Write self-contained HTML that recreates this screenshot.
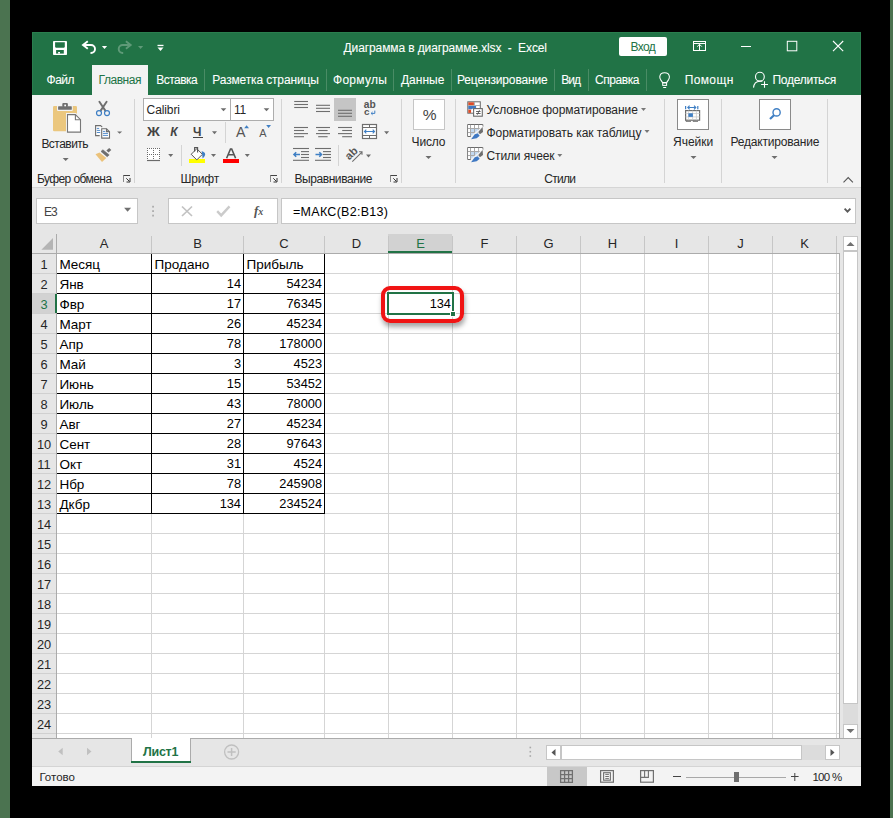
<!DOCTYPE html>
<html><head><meta charset="utf-8">
<style>
*{margin:0;padding:0;box-sizing:border-box}
html,body{width:893px;height:818px;overflow:hidden;background:#000;font-family:"Liberation Sans",sans-serif}
body{position:relative}
.a{position:absolute}
.t{position:absolute;white-space:pre;line-height:1}
svg{position:absolute;left:0;top:0;overflow:visible}
</style></head><body>

<div class="a" style="left:0px;top:0px;width:10px;height:818px;background:#4b7350"></div>
<div class="a" style="left:890px;top:0px;width:3px;height:818px;background:#4b7350"></div>
<div class="a" style="left:32px;top:32px;width:829px;height:754px;background:#e6e6e6"></div>
<div class="a" style="left:32px;top:32px;width:829px;height:63px;background:#217346;border:1px solid #2a7e4e;border-bottom:none"></div>
<div class="t" style="left:343.6px;top:42px;font-size:12px;letter-spacing:-0.114px;color:#ffffff;-webkit-text-stroke:0.08px #fff;">Диаграмма в диаграмме.xlsx  -  Excel</div>
<div class="a" style="left:619px;top:37px;width:48px;height:19px;background:#fff;border-radius:2px"></div>
<div class="t" style="left:630.5px;top:41px;font-size:12px;letter-spacing:-0.648px;color:#217346;">Вход</div>
<div class="a" style="left:92px;top:65px;width:56px;height:31px;background:#f3f3f3"></div>
<div class="t" style="left:46.6px;top:74px;font-size:12px;letter-spacing:-0.534px;color:#ffffff;-webkit-text-stroke:0.08px #fff;">Файл</div>
<div class="t" style="left:98.5px;top:74px;font-size:12px;letter-spacing:-0.446px;color:#217346;">Главная</div>
<div class="t" style="left:156.3px;top:74px;font-size:12px;letter-spacing:-0.533px;color:#ffffff;-webkit-text-stroke:0.08px #fff;">Вставка</div>
<div class="t" style="left:212.3px;top:74px;font-size:12px;letter-spacing:-0.147px;color:#ffffff;-webkit-text-stroke:0.08px #fff;">Разметка страницы</div>
<div class="t" style="left:333.0px;top:74px;font-size:12px;letter-spacing:0.264px;color:#ffffff;-webkit-text-stroke:0.08px #fff;">Формулы</div>
<div class="t" style="left:401.0px;top:74px;font-size:12px;letter-spacing:-0.010px;color:#ffffff;-webkit-text-stroke:0.08px #fff;">Данные</div>
<div class="t" style="left:457.0px;top:74px;font-size:12px;letter-spacing:-0.150px;color:#ffffff;-webkit-text-stroke:0.08px #fff;">Рецензирование</div>
<div class="t" style="left:561.3px;top:74px;font-size:12px;letter-spacing:-1.004px;color:#ffffff;-webkit-text-stroke:0.08px #fff;">Вид</div>
<div class="t" style="left:595.0px;top:74px;font-size:12px;letter-spacing:-0.429px;color:#ffffff;-webkit-text-stroke:0.08px #fff;">Справка</div>
<div class="a" style="left:204px;top:69px;width:1px;height:22px;background:#4a8c65"></div>
<div class="a" style="left:326px;top:69px;width:1px;height:22px;background:#4a8c65"></div>
<div class="a" style="left:393px;top:69px;width:1px;height:22px;background:#4a8c65"></div>
<div class="a" style="left:451px;top:69px;width:1px;height:22px;background:#4a8c65"></div>
<div class="a" style="left:554px;top:69px;width:1px;height:22px;background:#4a8c65"></div>
<div class="a" style="left:588px;top:69px;width:1px;height:22px;background:#4a8c65"></div>
<div class="a" style="left:646px;top:69px;width:1px;height:22px;background:#4a8c65"></div>
<div class="t" style="left:684.7px;top:74px;font-size:12px;letter-spacing:0.376px;color:#ffffff;-webkit-text-stroke:0.08px #fff;">Помощн</div>
<div class="t" style="left:772.5px;top:74px;font-size:12px;letter-spacing:-0.273px;color:#ffffff;-webkit-text-stroke:0.08px #fff;">Поделиться</div>
<div class="a" style="left:32px;top:95px;width:829px;height:93px;background:#f3f3f3;border-bottom:1px solid #d5d5d5"></div>
<div class="t" style="left:41.4px;top:138px;font-size:12px;letter-spacing:-0.523px;color:#262626;">Вставить</div>
<div class="t" style="left:36.9px;top:173px;font-size:12px;letter-spacing:-0.576px;color:#262626;">Буфер обмена</div>
<div class="t" style="left:180.4px;top:173px;font-size:12px;letter-spacing:-0.170px;color:#262626;">Шрифт</div>
<div class="t" style="left:294.4px;top:173px;font-size:12px;letter-spacing:-0.418px;color:#262626;">Выравнивание</div>
<div class="t" style="left:544.3px;top:173px;font-size:12px;letter-spacing:-0.717px;color:#262626;">Стили</div>
<div class="t" style="left:411.6px;top:136px;font-size:12px;letter-spacing:-0.178px;color:#262626;">Число</div>
<div class="t" style="left:673.0px;top:136px;font-size:12px;letter-spacing:0.011px;color:#262626;">Ячейки</div>
<div class="t" style="left:730.5px;top:136px;font-size:12px;letter-spacing:-0.200px;color:#262626;">Редактирование</div>
<div class="t" style="left:486.5px;top:104px;font-size:12px;letter-spacing:-0.061px;color:#262626;">Условное форматирование</div>
<div class="t" style="left:486.5px;top:127px;font-size:12px;letter-spacing:-0.051px;color:#262626;">Форматировать как таблицу</div>
<div class="t" style="left:486.5px;top:150px;font-size:12px;letter-spacing:-0.125px;color:#262626;">Стили ячеек</div>
<div class="a" style="left:134px;top:99px;width:1px;height:84px;background:#d4d4d4"></div>
<div class="a" style="left:281px;top:99px;width:1px;height:84px;background:#d4d4d4"></div>
<div class="a" style="left:401px;top:99px;width:1px;height:84px;background:#d4d4d4"></div>
<div class="a" style="left:455px;top:99px;width:1px;height:84px;background:#d4d4d4"></div>
<div class="a" style="left:664px;top:99px;width:1px;height:84px;background:#d4d4d4"></div>
<div class="a" style="left:721px;top:99px;width:1px;height:84px;background:#d4d4d4"></div>
<div class="a" style="left:827px;top:99px;width:1px;height:84px;background:#d4d4d4"></div>
<div class="a" style="left:143px;top:98px;width:88px;height:23px;background:#fff;border:1px solid #adadad"></div>
<div class="a" style="left:230px;top:98px;width:44px;height:23px;background:#fff;border:1px solid #adadad"></div>
<div class="t" style="left:146.6px;top:104px;font-size:12px;letter-spacing:-0.101px;color:#262626;">Calibri</div>
<div class="t" style="left:234.0px;top:104px;font-size:12px;letter-spacing:-0.256px;color:#262626;">11</div>
<div class="t" style="left:147.2px;top:126px;font-size:12.5px;letter-spacing:0.000px;color:#444;font-weight:bold;transform:scaleX(1.13);transform-origin:0 0;">Ж</div>
<div class="t" style="left:170.3px;top:126px;font-size:12px;letter-spacing:0.000px;color:#444;font-weight:bold;font-style:italic">К</div>
<div class="t" style="left:193.0px;top:126px;font-size:12px;letter-spacing:0.000px;color:#444;font-weight:bold;">Ч</div>
<div class="a" style="left:193px;top:137px;width:10px;height:1.4px;background:#444"></div>
<div class="a" style="left:225px;top:122px;width:1px;height:21px;background:#d4d4d4"></div>
<div class="t" style="left:236.0px;top:125.45px;font-size:14.24px;color:#555;">A</div>
<div class="t" style="left:259.2px;top:128.24px;font-size:10.94px;color:#555;">A</div>
<div class="a" style="left:147px;top:148px;width:13px;height:13px;background:#fff"></div>
<div class="a" style="left:181px;top:145px;width:1px;height:21px;background:#d4d4d4"></div>
<div class="a" style="left:189px;top:159px;width:16px;height:4px;background:#ffff00"></div>
<div class="a" style="left:223px;top:159px;width:16px;height:4px;background:#ff0000"></div>
<div class="a" style="left:334px;top:98px;width:22px;height:23px;background:#c5c5c5"></div>
<div class="t" style="left:363.8px;top:100.37px;font-size:10.2px;color:#555;font-weight:bold">ab</div>
<div class="t" style="left:364.0px;top:107.43px;font-size:9.89px;color:#555;font-weight:bold">c</div>
<div class="a" style="left:338px;top:145px;width:1px;height:21px;background:#d4d4d4"></div>
<div class="t" style="left:344.5px;top:147.5px;font-size:11px;font-weight:bold;color:#555;transform:rotate(-45deg);transform-origin:50% 50%">ab</div>
<div class="a" style="left:413px;top:99px;width:32px;height:31px;background:#fff;border:1px solid #c6c6c6"></div>
<div class="t" style="left:422.8px;top:107px;font-size:15.5px;letter-spacing:0.000px;color:#444;">%</div>
<div class="a" style="left:677px;top:99px;width:32px;height:31px;background:#fff;border:1px solid #8a8a8a"></div>
<div class="a" style="left:759px;top:99px;width:32px;height:31px;background:#fff;border:1px solid #8a8a8a"></div>
<div class="a" style="left:36px;top:198px;width:102px;height:26px;background:#fff;border:1px solid #c6c6c6"></div>
<div class="t" style="left:43.9px;top:206px;font-size:12px;letter-spacing:-0.877px;color:#444;">E3</div>
<div class="a" style="left:168px;top:198px;width:110px;height:26px;background:#fff;border:1px solid #c6c6c6"></div>
<div class="t" style="left:254px;top:204px;font-size:13px;font-family:'Liberation Serif',serif;font-style:italic;font-weight:bold;color:#555">f<span style="font-size:10px">x</span></div>
<div class="a" style="left:281px;top:198px;width:575px;height:26px;background:#fff;border:1px solid #c6c6c6"></div>
<div class="t" style="left:293.0px;top:206px;font-size:12.5px;letter-spacing:0.288px;color:#000;">=МАКС(B2:B13)</div>
<div class="a" style="left:32px;top:234px;width:807px;height:19px;background:#e6e6e6"></div>
<div class="a" style="left:56px;top:253px;width:783px;height:485px;background:#fff"></div>
<div class="a" style="left:32px;top:253px;width:24px;height:485px;background:#e6e6e6"></div>
<div class="a" style="left:388px;top:234px;width:64px;height:19px;background:#d2d2d2"></div>
<div class="a" style="left:32px;top:293px;width:24px;height:20px;background:#d2d2d2"></div>
<div class="a" style="left:57px;top:273px;width:782px;height:1px;background:#d5d5d5"></div><div class="a" style="left:32px;top:273px;width:24px;height:1px;background:#d0d0d0"></div><div class="a" style="left:57px;top:293px;width:782px;height:1px;background:#d5d5d5"></div><div class="a" style="left:32px;top:293px;width:24px;height:1px;background:#d0d0d0"></div><div class="a" style="left:57px;top:313px;width:782px;height:1px;background:#d5d5d5"></div><div class="a" style="left:32px;top:313px;width:24px;height:1px;background:#d0d0d0"></div><div class="a" style="left:57px;top:333px;width:782px;height:1px;background:#d5d5d5"></div><div class="a" style="left:32px;top:333px;width:24px;height:1px;background:#d0d0d0"></div><div class="a" style="left:57px;top:353px;width:782px;height:1px;background:#d5d5d5"></div><div class="a" style="left:32px;top:353px;width:24px;height:1px;background:#d0d0d0"></div><div class="a" style="left:57px;top:373px;width:782px;height:1px;background:#d5d5d5"></div><div class="a" style="left:32px;top:373px;width:24px;height:1px;background:#d0d0d0"></div><div class="a" style="left:57px;top:393px;width:782px;height:1px;background:#d5d5d5"></div><div class="a" style="left:32px;top:393px;width:24px;height:1px;background:#d0d0d0"></div><div class="a" style="left:57px;top:413px;width:782px;height:1px;background:#d5d5d5"></div><div class="a" style="left:32px;top:413px;width:24px;height:1px;background:#d0d0d0"></div><div class="a" style="left:57px;top:433px;width:782px;height:1px;background:#d5d5d5"></div><div class="a" style="left:32px;top:433px;width:24px;height:1px;background:#d0d0d0"></div><div class="a" style="left:57px;top:453px;width:782px;height:1px;background:#d5d5d5"></div><div class="a" style="left:32px;top:453px;width:24px;height:1px;background:#d0d0d0"></div><div class="a" style="left:57px;top:473px;width:782px;height:1px;background:#d5d5d5"></div><div class="a" style="left:32px;top:473px;width:24px;height:1px;background:#d0d0d0"></div><div class="a" style="left:57px;top:493px;width:782px;height:1px;background:#d5d5d5"></div><div class="a" style="left:32px;top:493px;width:24px;height:1px;background:#d0d0d0"></div><div class="a" style="left:57px;top:513px;width:782px;height:1px;background:#d5d5d5"></div><div class="a" style="left:32px;top:513px;width:24px;height:1px;background:#d0d0d0"></div><div class="a" style="left:57px;top:533px;width:782px;height:1px;background:#d5d5d5"></div><div class="a" style="left:32px;top:533px;width:24px;height:1px;background:#d0d0d0"></div><div class="a" style="left:57px;top:553px;width:782px;height:1px;background:#d5d5d5"></div><div class="a" style="left:32px;top:553px;width:24px;height:1px;background:#d0d0d0"></div><div class="a" style="left:57px;top:573px;width:782px;height:1px;background:#d5d5d5"></div><div class="a" style="left:32px;top:573px;width:24px;height:1px;background:#d0d0d0"></div><div class="a" style="left:57px;top:593px;width:782px;height:1px;background:#d5d5d5"></div><div class="a" style="left:32px;top:593px;width:24px;height:1px;background:#d0d0d0"></div><div class="a" style="left:57px;top:613px;width:782px;height:1px;background:#d5d5d5"></div><div class="a" style="left:32px;top:613px;width:24px;height:1px;background:#d0d0d0"></div><div class="a" style="left:57px;top:633px;width:782px;height:1px;background:#d5d5d5"></div><div class="a" style="left:32px;top:633px;width:24px;height:1px;background:#d0d0d0"></div><div class="a" style="left:57px;top:653px;width:782px;height:1px;background:#d5d5d5"></div><div class="a" style="left:32px;top:653px;width:24px;height:1px;background:#d0d0d0"></div><div class="a" style="left:57px;top:673px;width:782px;height:1px;background:#d5d5d5"></div><div class="a" style="left:32px;top:673px;width:24px;height:1px;background:#d0d0d0"></div><div class="a" style="left:57px;top:693px;width:782px;height:1px;background:#d5d5d5"></div><div class="a" style="left:32px;top:693px;width:24px;height:1px;background:#d0d0d0"></div><div class="a" style="left:57px;top:713px;width:782px;height:1px;background:#d5d5d5"></div><div class="a" style="left:32px;top:713px;width:24px;height:1px;background:#d0d0d0"></div><div class="a" style="left:57px;top:733px;width:782px;height:1px;background:#d5d5d5"></div><div class="a" style="left:32px;top:733px;width:24px;height:1px;background:#d0d0d0"></div><div class="a" style="left:151px;top:253px;width:1px;height:485px;background:#d5d5d5"></div><div class="a" style="left:151px;top:236px;width:1px;height:17px;background:#c6c6c6"></div><div class="a" style="left:243px;top:253px;width:1px;height:485px;background:#d5d5d5"></div><div class="a" style="left:243px;top:236px;width:1px;height:17px;background:#c6c6c6"></div><div class="a" style="left:324px;top:253px;width:1px;height:485px;background:#d5d5d5"></div><div class="a" style="left:324px;top:236px;width:1px;height:17px;background:#c6c6c6"></div><div class="a" style="left:388px;top:253px;width:1px;height:485px;background:#d5d5d5"></div><div class="a" style="left:388px;top:236px;width:1px;height:17px;background:#c6c6c6"></div><div class="a" style="left:452px;top:253px;width:1px;height:485px;background:#d5d5d5"></div><div class="a" style="left:452px;top:236px;width:1px;height:17px;background:#c6c6c6"></div><div class="a" style="left:516px;top:253px;width:1px;height:485px;background:#d5d5d5"></div><div class="a" style="left:516px;top:236px;width:1px;height:17px;background:#c6c6c6"></div><div class="a" style="left:580px;top:253px;width:1px;height:485px;background:#d5d5d5"></div><div class="a" style="left:580px;top:236px;width:1px;height:17px;background:#c6c6c6"></div><div class="a" style="left:644px;top:253px;width:1px;height:485px;background:#d5d5d5"></div><div class="a" style="left:644px;top:236px;width:1px;height:17px;background:#c6c6c6"></div><div class="a" style="left:708px;top:253px;width:1px;height:485px;background:#d5d5d5"></div><div class="a" style="left:708px;top:236px;width:1px;height:17px;background:#c6c6c6"></div><div class="a" style="left:772px;top:253px;width:1px;height:485px;background:#d5d5d5"></div><div class="a" style="left:772px;top:236px;width:1px;height:17px;background:#c6c6c6"></div><div class="a" style="left:836px;top:253px;width:1px;height:485px;background:#d5d5d5"></div><div class="a" style="left:836px;top:236px;width:1px;height:17px;background:#c6c6c6"></div>
<div class="a" style="left:32px;top:253px;width:807px;height:1px;background:#ababab"></div>
<div class="a" style="left:56px;top:234px;width:1px;height:504px;background:#ababab"></div>
<div class="a" style="left:839px;top:253px;width:1px;height:485px;background:#ababab"></div>
<div class="a" style="left:388px;top:251px;width:64px;height:2px;background:#217346"></div>
<div class="a" style="left:55px;top:294px;width:2px;height:19px;background:#217346"></div>
<div class="t" style="left:4.0px;width:200px;text-align:center;top:237.30px;font-size:13px;color:#262626;">A</div>
<div class="t" style="left:97.5px;width:200px;text-align:center;top:237.30px;font-size:13px;color:#262626;">B</div>
<div class="t" style="left:184.0px;width:200px;text-align:center;top:237.30px;font-size:13px;color:#262626;">C</div>
<div class="t" style="left:256.5px;width:200px;text-align:center;top:237.30px;font-size:13px;color:#262626;">D</div>
<div class="t" style="left:320.5px;width:200px;text-align:center;top:237.30px;font-size:13px;color:#217346;">E</div>
<div class="t" style="left:384.5px;width:200px;text-align:center;top:237.30px;font-size:13px;color:#262626;">F</div>
<div class="t" style="left:448.5px;width:200px;text-align:center;top:237.30px;font-size:13px;color:#262626;">G</div>
<div class="t" style="left:512.5px;width:200px;text-align:center;top:237.30px;font-size:13px;color:#262626;">H</div>
<div class="t" style="left:576.5px;width:200px;text-align:center;top:237.30px;font-size:13px;color:#262626;">I</div>
<div class="t" style="left:640.5px;width:200px;text-align:center;top:237.30px;font-size:13px;color:#262626;">J</div>
<div class="t" style="left:704.5px;width:200px;text-align:center;top:237.30px;font-size:13px;color:#262626;">K</div>
<div class="t" style="left:-56.0px;width:200px;text-align:center;top:259.46px;font-size:12.8px;color:#262626;">1</div>
<div class="t" style="left:-56.0px;width:200px;text-align:center;top:279.46px;font-size:12.8px;color:#262626;">2</div>
<div class="t" style="left:-56.0px;width:200px;text-align:center;top:299.46px;font-size:12.8px;color:#217346;">3</div>
<div class="t" style="left:-56.0px;width:200px;text-align:center;top:319.46px;font-size:12.8px;color:#262626;">4</div>
<div class="t" style="left:-56.0px;width:200px;text-align:center;top:339.46px;font-size:12.8px;color:#262626;">5</div>
<div class="t" style="left:-56.0px;width:200px;text-align:center;top:359.46px;font-size:12.8px;color:#262626;">6</div>
<div class="t" style="left:-56.0px;width:200px;text-align:center;top:379.46px;font-size:12.8px;color:#262626;">7</div>
<div class="t" style="left:-56.0px;width:200px;text-align:center;top:399.46px;font-size:12.8px;color:#262626;">8</div>
<div class="t" style="left:-56.0px;width:200px;text-align:center;top:419.46px;font-size:12.8px;color:#262626;">9</div>
<div class="t" style="left:-56.0px;width:200px;text-align:center;top:439.46px;font-size:12.8px;color:#262626;">10</div>
<div class="t" style="left:-56.0px;width:200px;text-align:center;top:459.46px;font-size:12.8px;color:#262626;">11</div>
<div class="t" style="left:-56.0px;width:200px;text-align:center;top:479.46px;font-size:12.8px;color:#262626;">12</div>
<div class="t" style="left:-56.0px;width:200px;text-align:center;top:499.46px;font-size:12.8px;color:#262626;">13</div>
<div class="t" style="left:-56.0px;width:200px;text-align:center;top:519.46px;font-size:12.8px;color:#262626;">14</div>
<div class="t" style="left:-56.0px;width:200px;text-align:center;top:539.46px;font-size:12.8px;color:#262626;">15</div>
<div class="t" style="left:-56.0px;width:200px;text-align:center;top:559.46px;font-size:12.8px;color:#262626;">16</div>
<div class="t" style="left:-56.0px;width:200px;text-align:center;top:579.46px;font-size:12.8px;color:#262626;">17</div>
<div class="t" style="left:-56.0px;width:200px;text-align:center;top:599.46px;font-size:12.8px;color:#262626;">18</div>
<div class="t" style="left:-56.0px;width:200px;text-align:center;top:619.46px;font-size:12.8px;color:#262626;">19</div>
<div class="t" style="left:-56.0px;width:200px;text-align:center;top:639.46px;font-size:12.8px;color:#262626;">20</div>
<div class="t" style="left:-56.0px;width:200px;text-align:center;top:659.46px;font-size:12.8px;color:#262626;">21</div>
<div class="t" style="left:-56.0px;width:200px;text-align:center;top:679.46px;font-size:12.8px;color:#262626;">22</div>
<div class="t" style="left:-56.0px;width:200px;text-align:center;top:699.46px;font-size:12.8px;color:#262626;">23</div>
<div class="t" style="left:-56.0px;width:200px;text-align:center;top:719.46px;font-size:12.8px;color:#262626;">24</div>
<div class="t" style="left:-56.0px;width:200px;text-align:center;top:739.46px;font-size:12.8px;color:#262626;">25</div>
<div class="a" style="left:57px;top:273px;width:268px;height:1px;background:#000"></div><div class="a" style="left:57px;top:293px;width:268px;height:1px;background:#000"></div><div class="a" style="left:57px;top:313px;width:268px;height:1px;background:#000"></div><div class="a" style="left:57px;top:333px;width:268px;height:1px;background:#000"></div><div class="a" style="left:57px;top:353px;width:268px;height:1px;background:#000"></div><div class="a" style="left:57px;top:373px;width:268px;height:1px;background:#000"></div><div class="a" style="left:57px;top:393px;width:268px;height:1px;background:#000"></div><div class="a" style="left:57px;top:413px;width:268px;height:1px;background:#000"></div><div class="a" style="left:57px;top:433px;width:268px;height:1px;background:#000"></div><div class="a" style="left:57px;top:453px;width:268px;height:1px;background:#000"></div><div class="a" style="left:57px;top:473px;width:268px;height:1px;background:#000"></div><div class="a" style="left:57px;top:493px;width:268px;height:1px;background:#000"></div><div class="a" style="left:57px;top:513px;width:268px;height:1px;background:#000"></div><div class="a" style="left:151px;top:254px;width:1px;height:260px;background:#000"></div><div class="a" style="left:243px;top:254px;width:1px;height:260px;background:#000"></div><div class="a" style="left:324px;top:254px;width:1px;height:260px;background:#000"></div>
<div class="t" style="left:59.4px;top:257.87px;font-size:13.5px;color:#000;">Месяц</div>
<div class="t" style="left:154.6px;top:257.87px;font-size:13.5px;color:#000;">Продано</div>
<div class="t" style="left:246.5px;top:257.87px;font-size:13.5px;color:#000;">Прибыль</div>
<div class="t" style="left:59.4px;top:277.87px;font-size:13.5px;color:#000;">Янв</div>
<div class="t" style="right:652.0px;top:278.46px;font-size:12.8px;color:#000;">14</div>
<div class="t" style="right:571.0px;top:278.46px;font-size:12.8px;color:#000;">54234</div>
<div class="t" style="left:59.4px;top:297.87px;font-size:13.5px;color:#000;">Фвр</div>
<div class="t" style="right:652.0px;top:298.46px;font-size:12.8px;color:#000;">17</div>
<div class="t" style="right:571.0px;top:298.46px;font-size:12.8px;color:#000;">76345</div>
<div class="t" style="left:59.4px;top:317.87px;font-size:13.5px;color:#000;">Март</div>
<div class="t" style="right:652.0px;top:318.46px;font-size:12.8px;color:#000;">26</div>
<div class="t" style="right:571.0px;top:318.46px;font-size:12.8px;color:#000;">45234</div>
<div class="t" style="left:59.4px;top:337.87px;font-size:13.5px;color:#000;">Апр</div>
<div class="t" style="right:652.0px;top:338.46px;font-size:12.8px;color:#000;">78</div>
<div class="t" style="right:571.0px;top:338.46px;font-size:12.8px;color:#000;">178000</div>
<div class="t" style="left:59.4px;top:357.87px;font-size:13.5px;color:#000;">Май</div>
<div class="t" style="right:652.0px;top:358.46px;font-size:12.8px;color:#000;">3</div>
<div class="t" style="right:571.0px;top:358.46px;font-size:12.8px;color:#000;">4523</div>
<div class="t" style="left:59.4px;top:377.87px;font-size:13.5px;color:#000;">Июнь</div>
<div class="t" style="right:652.0px;top:378.46px;font-size:12.8px;color:#000;">15</div>
<div class="t" style="right:571.0px;top:378.46px;font-size:12.8px;color:#000;">53452</div>
<div class="t" style="left:59.4px;top:397.87px;font-size:13.5px;color:#000;">Июль</div>
<div class="t" style="right:652.0px;top:398.46px;font-size:12.8px;color:#000;">43</div>
<div class="t" style="right:571.0px;top:398.46px;font-size:12.8px;color:#000;">78000</div>
<div class="t" style="left:59.4px;top:417.87px;font-size:13.5px;color:#000;">Авг</div>
<div class="t" style="right:652.0px;top:418.46px;font-size:12.8px;color:#000;">27</div>
<div class="t" style="right:571.0px;top:418.46px;font-size:12.8px;color:#000;">45234</div>
<div class="t" style="left:59.4px;top:437.87px;font-size:13.5px;color:#000;">Сент</div>
<div class="t" style="right:652.0px;top:438.46px;font-size:12.8px;color:#000;">28</div>
<div class="t" style="right:571.0px;top:438.46px;font-size:12.8px;color:#000;">97643</div>
<div class="t" style="left:59.4px;top:457.87px;font-size:13.5px;color:#000;">Окт</div>
<div class="t" style="right:652.0px;top:458.46px;font-size:12.8px;color:#000;">31</div>
<div class="t" style="right:571.0px;top:458.46px;font-size:12.8px;color:#000;">4524</div>
<div class="t" style="left:59.4px;top:477.87px;font-size:13.5px;color:#000;">Нбр</div>
<div class="t" style="right:652.0px;top:478.46px;font-size:12.8px;color:#000;">78</div>
<div class="t" style="right:571.0px;top:478.46px;font-size:12.8px;color:#000;">245908</div>
<div class="t" style="left:59.4px;top:497.87px;font-size:13.5px;color:#000;">Дкбр</div>
<div class="t" style="right:652.0px;top:498.46px;font-size:12.8px;color:#000;">134</div>
<div class="t" style="right:571.0px;top:498.46px;font-size:12.8px;color:#000;">234524</div>
<div class="a" style="left:387px;top:292px;width:67px;height:23px;border:2px solid #217346"></div>
<div class="a" style="left:450px;top:311px;width:6px;height:6px;background:#217346;border:1px solid #fff"></div>
<div class="t" style="right:442.0px;top:298.46px;font-size:12.8px;color:#000;">134</div>
<div class="a" style="left:380.5px;top:285.5px;width:83px;height:37px;border:4px solid #f01414;border-radius:9px;box-shadow:1px 4px 5px rgba(0,0,0,0.35), inset 0 0 1px rgba(0,0,0,0.2)"></div>
<div class="a" style="left:843px;top:236px;width:15px;height:15px;background:#fff;border:1px solid #c6c6c6"></div>
<div class="a" style="left:843px;top:251px;width:15px;height:453px;background:#fff;border:1px solid #c6c6c6"></div>
<div class="a" style="left:843px;top:704px;width:15px;height:20px;background:#dcdcdc"></div>
<div class="a" style="left:843px;top:724px;width:15px;height:15px;background:#fff;border:1px solid #c6c6c6"></div>
<div class="a" style="left:32px;top:738px;width:829px;height:28px;background:#e6e6e6;border-top:1px solid #ababab"></div>
<div class="a" style="left:131px;top:738px;width:60px;height:25px;background:#fff;border:1px solid #ababab;border-top:none"></div>
<div class="a" style="left:131px;top:761px;width:60px;height:2px;background:#217346"></div>
<div class="t" style="left:143.0px;top:746px;font-size:12.5px;letter-spacing:-0.270px;color:#217346;font-weight:bold;">Лист1</div>
<div class="a" style="left:546px;top:745px;width:15px;height:15px;background:#fff;border:1px solid #c6c6c6"></div>
<div class="a" style="left:561px;top:745px;width:241px;height:15px;background:#fff;border:1px solid #c6c6c6"></div>
<div class="a" style="left:802px;top:745px;width:23px;height:15px;background:#dcdcdc"></div>
<div class="a" style="left:825px;top:745px;width:15px;height:15px;background:#fff;border:1px solid #c6c6c6"></div>
<div class="a" style="left:32px;top:766px;width:829px;height:20px;background:#f3f3f3;border-top:1px solid #d4d4d4"></div>
<div class="t" style="left:39.4px;top:772px;font-size:11.5px;letter-spacing:0.018px;color:#262626;">Готово</div>
<div class="a" style="left:547px;top:767px;width:40px;height:19px;background:#c8c8c8"></div>
<div class="a" style="left:686px;top:777px;width:100px;height:1px;background:#a8a8a8"></div>
<div class="a" style="left:734px;top:772px;width:5px;height:10px;background:#6e6e6e"></div>
<div class="t" style="left:812.4px;top:772px;font-size:11.5px;letter-spacing:-0.702px;color:#262626;">100 %</div>
<svg width="893" height="818" viewBox="0 0 893 818"><rect x="53" y="41" width="14" height="14" rx="0.8" fill="#ffffff"/><path d="M55.1 42.3h9.7v4.7l-0.8 0.8h-8.1l-0.8-0.8z" fill="#217346"/><rect x="56.1" y="50" width="7.7" height="3.6" fill="#217346"/><rect x="58.1" y="52" width="1.9" height="1.6" fill="#ffffff"/><path d="M83.5 45H91a4 4 0 0 1 0 8h-0.5" fill="none" stroke="#ffffff" stroke-width="1.9"/><path d="M87.8 41.3L83 45L87.8 48.7" fill="none" stroke="#ffffff" stroke-width="1.9"/><path d="M101.9 46h5.2l-2.6 3z" fill="#ffffff"/><path d="M130.2 45H122.7a4 4 0 0 0 0 8h0.5" fill="none" stroke="#5f9a78" stroke-width="1.9"/><path d="M125.9 41.3L130.7 45L125.9 48.7" fill="none" stroke="#5f9a78" stroke-width="1.9"/><path d="M138.0 46h5.2l-2.6 3z" fill="#5f9a78"/><rect x="157.5" y="44.8" width="6" height="1.3" fill="#ffffff"/><path d="M157.5 47.6h6l-3 3.4z" fill="#ffffff"/><rect x="693.5" y="41.5" width="12" height="9" fill="none" stroke="#ffffff" stroke-width="1"/><path d="M693.5 43.5h12M699.5 50V44.3M697.2 46.6l2.3-2.3 2.3 2.3" fill="none" stroke="#ffffff" stroke-width="1"/><path d="M741 46.5h10" stroke="#ffffff" stroke-width="1"/><rect x="787.3" y="41.3" width="9.5" height="9.5" fill="none" stroke="#ffffff" stroke-width="1"/><path d="M833 41l10.2 10.2M843.2 41L833 51.2" stroke="#ffffff" stroke-width="1.1"/><path d="M662.6 82.6L660.6 79.6Q659.7 78.1 659.8 76.6Q660.2 72.7 664.6 72.7Q669 72.7 669.4 76.6Q669.5 78.1 668.6 79.6L666.6 82.6Z" fill="none" stroke="#ffffff" stroke-width="1.05"/><rect x="662.7" y="82.8" width="3.9" height="2.6" fill="none" stroke="#ffffff" stroke-width="1"/><path d="M663.2 87.5h3" stroke="#ffffff" stroke-width="1"/><circle cx="759.9" cy="76.7" r="4.4" fill="none" stroke="#ffffff" stroke-width="1.1"/><path d="M753.5 87.6C753.9 83.8 756.3 81.5 759.8 81.3h2.6" fill="none" stroke="#ffffff" stroke-width="1.1"/><path d="M761.1 84.5h6.9M764.5 81.3v6.5" stroke="#ffffff" stroke-width="1.1"/><path d="M62.7 158h6l-3 3z" fill="#6d6d6d"/><path d="M425.5 156h6l-3 3z" fill="#6d6d6d"/><path d="M690.5 156h6l-3 3z" fill="#6d6d6d"/><path d="M771.5 156h6l-3 3z" fill="#6d6d6d"/><path d="M641.0 108h5.0l-2.5 3z" fill="#777"/><path d="M644.5 130h5.0l-2.5 3z" fill="#777"/><path d="M557.3 154h5.0l-2.5 3z" fill="#777"/><path d="M123.5 182V175.5H130" fill="none" stroke="#8a8a8a" stroke-width="1"/><path d="M123.5 175.5H130" fill="none" stroke="#444" stroke-width="1"/><path d="M126.3 178.3L129.3 181.3M126.5 182H130V178" fill="none" stroke="#333" stroke-width="1"/><path d="M270.5 182V175.5H277" fill="none" stroke="#8a8a8a" stroke-width="1"/><path d="M270.5 175.5H277" fill="none" stroke="#444" stroke-width="1"/><path d="M273.3 178.3L276.3 181.3M273.5 182H277V178" fill="none" stroke="#333" stroke-width="1"/><path d="M390.5 182V175.5H397" fill="none" stroke="#8a8a8a" stroke-width="1"/><path d="M390.5 175.5H397" fill="none" stroke="#444" stroke-width="1"/><path d="M393.3 178.3L396.3 181.3M393.5 182H397V178" fill="none" stroke="#333" stroke-width="1"/><path d="M843.5 182.3l4.7-4.7 4.7 4.7" fill="none" stroke="#555" stroke-width="1.1"/><rect x="53" y="106" width="24" height="25.2" rx="1.3" fill="#ebc77e"/><rect x="57" y="105" width="15.8" height="6" rx="1" fill="#f3f3f3"/><rect x="58.1" y="106.2" width="13.7" height="3.6" rx="0.6" fill="#707070"/><rect x="62.3" y="103" width="5.6" height="4" rx="1" fill="#707070"/><rect x="64.3" y="104.6" width="1.7" height="1.7" fill="#fff"/><path d="M67.5 114.6h7.9l5.1 5.1v12.4h-13z" fill="#fff" stroke="#f3f3f3" stroke-width="3"/><path d="M67.5 114.6h7.9l5.1 5.1v12.4h-13z" fill="#fff" stroke="#777" stroke-width="1.1"/><path d="M75.4 114.6v5.1h5.1" fill="none" stroke="#777" stroke-width="1.1"/><path d="M99.4 101.8L105.3 110.6M106.6 101.8L100.7 110.6" stroke="#6e6e6e" stroke-width="1.9" stroke-linecap="round"/><circle cx="99" cy="113.1" r="2.5" fill="none" stroke="#3f7fc4" stroke-width="1.2"/><circle cx="107" cy="113.1" r="2.5" fill="none" stroke="#3f7fc4" stroke-width="1.2"/><path d="M99.7 135.6H95.6V125.6h5l1.6 1.6" fill="#fff" stroke="#6e6e6e" stroke-width="1.1"/><path d="M101.7 128.8h4.8l3 3v6.3h-7.8z" fill="#fff" stroke="#6e6e6e" stroke-width="1.1"/><path d="M106.5 128.8v2.8h3" fill="none" stroke="#6e6e6e" stroke-width="1.1"/><path d="M97.2 128.4h1.6M97.2 130.4h2.6M97.2 132.5h2.6M103.3 131.4h1.6M103.3 133.4h4.3M103.3 135.4h4.3" stroke="#3f7fc4" stroke-width="0.9" stroke-linecap="round"/><path d="M117.1 131.4h5.0l-2.5 2.4z" fill="#6d6d6d"/><path d="M95.5 154.2L99.5 152.6L106.3 158.1L102 162z" fill="#ebc27a"/><path d="M101 151.4L102.9 149.8L109.2 154.9L107.2 156.8z" fill="#6e6e6e" stroke="#6e6e6e" stroke-width="0.6" stroke-linejoin="round"/><path d="M106.4 150.6L109.2 147.9L111.3 149.9L108.5 152.5z" fill="#6e6e6e"/><path d="M220.7 108.2h5.6l-2.8 3z" fill="#6d6d6d"/><path d="M263.7 108.2h5.6l-2.8 3z" fill="#6d6d6d"/><path d="M212.0 131.3h5.0l-2.5 3z" fill="#6d6d6d"/><path d="M244.2 128.2l2.4-3 2.4 3z" fill="#3f7fc4"/><path d="M266.2 125h4.8l-2.4 3z" fill="#3f7fc4"/><path d="M147 148h1v1h-1zM147 154h1v1h-1zM149 148h1v1h-1zM149 154h1v1h-1zM151 148h1v1h-1zM151 154h1v1h-1zM153 148h1v1h-1zM153 154h1v1h-1zM155 148h1v1h-1zM155 154h1v1h-1zM157 148h1v1h-1zM157 154h1v1h-1zM159 148h1v1h-1zM159 154h1v1h-1zM147 150h1v1h-1zM147 152h1v1h-1zM147 156h1v1h-1zM147 158h1v1h-1zM153 150h1v1h-1zM153 152h1v1h-1zM153 156h1v1h-1zM153 158h1v1h-1zM159 150h1v1h-1zM159 152h1v1h-1zM159 156h1v1h-1zM159 158h1v1h-1z" fill="#6a6a6a"/><path d="M147 160.5h13" stroke="#6a6a6a" stroke-width="1.2"/><path d="M168.2 154h5.0l-2.5 3z" fill="#6d6d6d"/><path d="M191.2 154.3L196.8 148.7L202.4 154.3L196.8 159.9z" fill="#fff" stroke="#555" stroke-width="1"/><path d="M194.6 151.5V147.6h3v4.8" fill="none" stroke="#555" stroke-width="1.1"/><path d="M201.6 151.2c1.6 0.2 3.6 1.2 3.6 3 0 1.5-1.2 3-2.6 4.3-0.2-2.2-0.3-3.8-1-7.3z" fill="#3f7fc4"/><path d="M211.0 154h5.0l-2.5 3z" fill="#6d6d6d"/><path d="M226.6 158.2l3.9-9.2h1.2l3.9 9.2M228.3 154.7h5.6" fill="none" stroke="#555" stroke-width="1.6"/><path d="M244.8 154h5.0l-2.5 3z" fill="#6d6d6d"/><path d="M294.2 101.5H308" stroke="#6e6e6e" stroke-width="1.1"/><path d="M294.2 104.5H308" stroke="#6e6e6e" stroke-width="1.1"/><path d="M294.2 107.5H308" stroke="#6e6e6e" stroke-width="1.1"/><path d="M316 105.3H330" stroke="#6e6e6e" stroke-width="1.1"/><path d="M316 108.3H330" stroke="#6e6e6e" stroke-width="1.1"/><path d="M316 111.5H330" stroke="#6e6e6e" stroke-width="1.1"/><path d="M338 110.3H352" stroke="#6e6e6e" stroke-width="1.1"/><path d="M338 113.3H352" stroke="#6e6e6e" stroke-width="1.1"/><path d="M338 116.3H352" stroke="#6e6e6e" stroke-width="1.1"/><path d="M374.8 110.6v2.8h-3.6M372.6 112l-1.5 1.4 1.5 1.4" fill="none" stroke="#3f7fc4" stroke-width="1"/><path d="M294 127.5H308" stroke="#6e6e6e" stroke-width="1.1"/><path d="M294 133.6H308" stroke="#6e6e6e" stroke-width="1.1"/><path d="M294 130.5H304" stroke="#6e6e6e" stroke-width="1.1"/><path d="M294 136.7H304" stroke="#6e6e6e" stroke-width="1.1"/><path d="M316 127.5H330" stroke="#6e6e6e" stroke-width="1.1"/><path d="M316 133.6H330" stroke="#6e6e6e" stroke-width="1.1"/><path d="M318.2 130.5H327.6" stroke="#6e6e6e" stroke-width="1.1"/><path d="M318.2 136.7H327.6" stroke="#6e6e6e" stroke-width="1.1"/><path d="M338 127.5H352" stroke="#6e6e6e" stroke-width="1.1"/><path d="M338 133.6H352" stroke="#6e6e6e" stroke-width="1.1"/><path d="M342.2 130.5H352" stroke="#6e6e6e" stroke-width="1.1"/><path d="M342.2 136.7H352" stroke="#6e6e6e" stroke-width="1.1"/><rect x="362.5" y="124.5" width="14" height="14" fill="#fff" stroke="#6e6e6e" stroke-width="1.2"/><path d="M362.5 127.5h14M362.5 135.5h14M369.5 124.5v3M369.5 135.5v3" stroke="#6e6e6e" stroke-width="1"/><path d="M364.5 131.5h10M366.3 129.7l-1.8 1.8 1.8 1.8M372.7 129.7l1.8 1.8-1.8 1.8" fill="none" stroke="#3f7fc4" stroke-width="1.1"/><path d="M384.1 131.2h5.0l-2.5 3z" fill="#6d6d6d"/><path d="M293 148.5H309" stroke="#6e6e6e" stroke-width="1.1"/><path d="M293 160.3H309" stroke="#6e6e6e" stroke-width="1.1"/><path d="M301 151.6H309" stroke="#6e6e6e" stroke-width="1.1"/><path d="M301 154.5H309" stroke="#6e6e6e" stroke-width="1.1"/><path d="M301 157.5H309" stroke="#6e6e6e" stroke-width="1.1"/><path d="M300 154.5h-6M296.2 152.2l-2.3 2.3 2.3 2.3" fill="none" stroke="#3f7fc4" stroke-width="1.5"/><path d="M315 148.5H331" stroke="#6e6e6e" stroke-width="1.1"/><path d="M315 160.3H331" stroke="#6e6e6e" stroke-width="1.1"/><path d="M323 151.6H331" stroke="#6e6e6e" stroke-width="1.1"/><path d="M323 154.5H331" stroke="#6e6e6e" stroke-width="1.1"/><path d="M323 157.5H331" stroke="#6e6e6e" stroke-width="1.1"/><path d="M315.5 154.5h6M319.3 152.2l2.3 2.3-2.3 2.3" fill="none" stroke="#3f7fc4" stroke-width="1.5"/><path d="M352.3 161.7l9.6-9.6M359 151.8h3v3" fill="none" stroke="#6e6e6e" stroke-width="1.1"/><path d="M366.0 154.5h5.0l-2.5 3z" fill="#6d6d6d"/><rect x="467.8" y="101.8" width="12.5" height="11.4" fill="#fff" stroke="#6a6a6a" stroke-width="1"/><path d="M474.5 102v3.5M468 105.5h12" stroke="#b0b0b0" stroke-width="1"/><rect x="468.3" y="102.3" width="5.6" height="2.8" fill="#dd4b26"/><path d="M468.3 105.9h7.8v2.9h-4v0.4h-3.8z" fill="#3f78c2"/><rect x="468.3" y="109.6" width="2.8" height="3.3" fill="#dd4b26"/><rect x="473.6" y="108.6" width="8.7" height="7.6" fill="#fff" stroke="#6a6a6a" stroke-width="1.1"/><path d="M476.1 111.5h4.5M476.1 113.5h4.5M479.5 110.2l-2.2 4.5" stroke="#555" stroke-width="0.9"/><path d="M467.7 136.5V124.5H482.8V126.8" fill="#fff" stroke="#6a6a6a" stroke-width="1"/><path d="M468.2 125.0h14.1v2.5l-11 9.3h-3.1z" fill="#fff"/><rect x="471" y="128.8" width="7.5" height="7.6" fill="#c2d8ef"/><path d="M470.5 124.8v11.6M474.5 124.8v10M478.6 124.8v6M468 128.5h13M468 132.5h9.5" stroke="#a8a8a8" stroke-width="1"/><path d="M467.7 136.5H471.5" stroke="#6a6a6a" stroke-width="1"/><path d="M471 136.8L483 126.8" stroke="#f3f3f3" stroke-width="1.6"/><path d="M478.3 132.1L482.6 127.0L483 131.9L479.9 134.3z" fill="#6e6e6e"/><path d="M471.1 139.2L474.8 134.3L477.7 133.6L479.7 135.8L476.7 138.2z" fill="#3f78c2"/><path d="M467.7 159.5V147.5H482.8V149.8" fill="#fff" stroke="#6a6a6a" stroke-width="1"/><path d="M468.2 148.0h14.1v2.5l-11 9.3h-3.1z" fill="#fff"/><rect x="471" y="151.8" width="7.5" height="7.6" fill="#c2d8ef"/><path d="M470.5 147.8v11.6M474.5 147.8v10M478.6 147.8v6M468 151.5h13M468 155.5h9.5" stroke="#a8a8a8" stroke-width="1"/><path d="M467.7 159.5H471.5" stroke="#6a6a6a" stroke-width="1"/><path d="M471 159.8L483 149.8" stroke="#f3f3f3" stroke-width="1.6"/><path d="M478.3 155.10000000000002L482.6 150.0L483 154.9L479.9 157.3z" fill="#6e6e6e"/><path d="M471.1 162.20000000000002L474.8 157.3L477.7 156.60000000000002L479.7 158.8L476.7 161.20000000000002z" fill="#3f78c2"/><path d="M687.8 107.5h8M689.6 105.7l-1.8 1.8 1.8 1.8M694 105.7l1.8 1.8-1.8 1.8" fill="none" stroke="#3f7fc4" stroke-width="1.1"/><path d="M685.6 106v3.2M697.8 106v3.2" stroke="#3f7fc4" stroke-width="1.2"/><rect x="685.6" y="110.6" width="14" height="9.6" fill="#fff" stroke="#6e6e6e" stroke-width="1.2"/><path d="M685.6 113.5h14M685.6 116.9h14M688.6 110.6v9.6M692.6 110.6v9.6M696.4 110.6v9.6" stroke="#cccccc" stroke-width="0.8"/><rect x="688.4" y="113.3" width="4.5" height="3.6" fill="#3f7fc4"/><path d="M686 120.5v0.8h5M693 120.5v0.8h5" fill="none" stroke="#6e6e6e" stroke-width="1"/><circle cx="776.6" cy="112.4" r="3.6" fill="none" stroke="#3f7fc4" stroke-width="1.4"/><path d="M774 115.3l-4 3.7" stroke="#3f7fc4" stroke-width="2.2"/><path d="M124.1 207.7h7.0l-3.5 4z" fill="#707070"/><rect x="152.2" y="205.79999999999998" width="1.7" height="1.8" fill="#a8a8a8"/><rect x="152.2" y="210.2" width="1.7" height="1.8" fill="#a8a8a8"/><rect x="152.2" y="214.7" width="1.7" height="1.8" fill="#a8a8a8"/><path d="M182 206.5l10 9.5M192 206.5l-10 9.5" stroke="#c2c2c2" stroke-width="1.7"/><path d="M217.2 211.2l4 4.2 8.3-9" fill="none" stroke="#cbcbcb" stroke-width="2.4"/><path d="M844.6 208.7l2.9 2.9 2.9-2.9" fill="none" stroke="#5a5a5a" stroke-width="1.9"/><path d="M41.4 249.7L53 238.1V249.7z" fill="#b4b4b4"/><path d="M846.5 246h8l-4-4z" fill="#707070"/><path d="M846.5 729h8l-4 4z" fill="#707070"/><path d="M62.7 747.8v7.4l-4.5-3.7z" fill="#c0c0c0"/><path d="M87 747.8v7.4l4.5-3.7z" fill="#c0c0c0"/><circle cx="231.6" cy="752" r="7" fill="none" stroke="#c0c0c0" stroke-width="1.3"/><path d="M227.5 752h8.2M231.6 747.9v8.2" stroke="#c0c0c0" stroke-width="1.5"/><rect x="529.5" y="746.7" width="1.6" height="1.6" fill="#a8a8a8"/><rect x="529.5" y="750.9000000000001" width="1.6" height="1.6" fill="#a8a8a8"/><rect x="529.5" y="755.2" width="1.6" height="1.6" fill="#a8a8a8"/><path d="M555.5 749v7l-4-3.5z" fill="#555"/><path d="M830.5 749v7l4-3.5z" fill="#555"/><path d="M560.6 770.1v12.8M564.6 770.1v12.8M568.6 770.1v12.8M572.4 770.1v12.8M560 770.6h13M560 774.6h13M560 778.6h13M560 782.4h13" stroke="#707070" stroke-width="1.25"/><rect x="600.6" y="770.6" width="12.8" height="11.6" fill="none" stroke="#707070" stroke-width="1.2"/><rect x="603.6" y="772.7" width="6.8" height="7.5" fill="none" stroke="#707070" stroke-width="1.1"/><path d="M605.3 774.4h3.6M605.3 776.5h3.6M605.3 778.6h3.6" stroke="#707070" stroke-width="1"/><rect x="640.6" y="770.6" width="12.8" height="11.6" fill="none" stroke="#707070" stroke-width="1.2"/><path d="M644.6 770.6v6.8M648.4 770.6v6.8H640.6" fill="none" stroke="#707070" stroke-width="1.1"/><path d="M673 776.5h8M791 776.5h7.6M794.8 773v8" stroke="#444" stroke-width="1"/></svg>
</body></html>
